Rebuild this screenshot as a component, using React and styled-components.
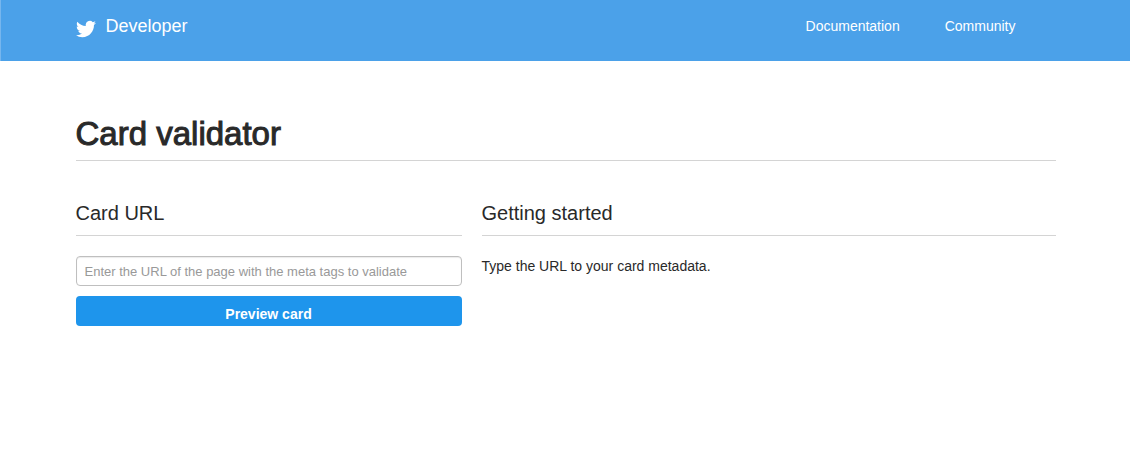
import React from 'react';
import styled, { createGlobalStyle } from 'styled-components';

const GlobalStyle = createGlobalStyle`
  *, *::before, *::after { box-sizing: border-box; }
  body {
    margin: 0;
    background: #fff;
    color: #292929;
    font: 14px/20px "Liberation Sans", Arial, sans-serif;
  }
`;

const Header = styled.header`
  min-height: 61px;
  background: #4ba1e9;
  border-left: 1px solid #76b6ee;
`;

const Container = styled.div`
  max-width: 1020px;
  margin: 0 auto;
  padding: 0 20px;
`;

const Bar = styled(Container)`
  display: flex;
  justify-content: space-between;
  align-items: flex-start;
  padding-top: 16px;
`;

const Brand = styled.a`
  display: flex;
  gap: 10px;
  color: #fff;
  font-size: 18px;
  line-height: 20px;
  text-decoration: none;
`;

const Bird = styled.svg`
  width: 20px;
  height: 20px;
  margin-top: 3px;
  fill: currentColor;
`;

const Nav = styled.nav`
  display: flex;
  gap: 45px;
  padding-right: 40px;
`;

const NavLink = styled.a`
  color: #fff;
  text-decoration: none;
`;

const Main = styled.main`
  padding: 52px 0 40px;
  border-left: 1px solid transparent;
`;

const Title = styled.h1`
  margin: 0 0 40px;
  padding-bottom: 6px;
  border-bottom: 1px solid #d4d4d4;
  font-size: 33px;
  line-height: 41px;
  font-weight: 400;
  -webkit-text-stroke: 1px currentColor;
`;

const Columns = styled.div`
  display: grid;
  grid-template-columns: minmax(0, 386fr) minmax(0, 574fr);
  gap: 20px;
`;

const SectionTitle = styled.h2`
  margin: 0 0 20px;
  padding-bottom: 10px;
  border-bottom: 1px solid #d4d4d4;
  font-size: 20px;
  line-height: 24px;
  font-weight: 400;
`;

const Form = styled.form`
  display: grid;
  gap: 10px;
`;

const UrlInput = styled.input`
  width: 100%;
  height: 30px;
  padding: 0 8px;
  border: 1px solid #bfbfbf;
  border-radius: 4px;
  background: #fff;
  color: inherit;
  font: inherit;
  font-size: 13px;
  box-shadow: inset 0 1px 1px rgba(0, 0, 0, 0.08);

  &::placeholder { color: #999; opacity: 1; }
`;

const SubmitButton = styled.button`
  height: 30px;
  padding: 6px 12px 0;
  border: 0;
  border-radius: 4px;
  background: #1e95ec;
  color: #fff;
  font: inherit;
  font-weight: 700;
  cursor: pointer;
`;

const Text = styled.p`
  margin: 0;
`;

export default function App() {
  return (
    <>
      <GlobalStyle />
      <Header>
        <Bar>
          <Brand href="#home">
            <Bird viewBox="0 0 24 24" aria-hidden="true">
              <path d="M23.954 4.569a10 10 0 0 1-2.825.775 4.958 4.958 0 0 0 2.163-2.723 9.99 9.99 0 0 1-3.127 1.184 4.92 4.92 0 0 0-8.384 4.482C7.691 8.094 4.066 6.13 1.64 3.161a4.822 4.822 0 0 0-.666 2.475c0 1.71.87 3.213 2.188 4.096a4.904 4.904 0 0 1-2.228-.616v.061a4.923 4.923 0 0 0 3.946 4.827 4.996 4.996 0 0 1-2.212.085 4.937 4.937 0 0 0 4.604 3.417 9.868 9.868 0 0 1-6.102 2.105c-.39 0-.779-.023-1.17-.067a13.995 13.995 0 0 0 7.557 2.209c9.054 0 13.999-7.496 13.999-13.986 0-.209 0-.42-.015-.63a9.936 9.936 0 0 0 2.46-2.548z" />
            </Bird>
            Developer
          </Brand>
          <Nav aria-label="Main">
            <NavLink href="#documentation">Documentation</NavLink>
            <NavLink href="#community">Community</NavLink>
          </Nav>
        </Bar>
      </Header>
      <Main>
        <Container>
          <Title>Card validator</Title>
          <Columns>
            <section>
              <SectionTitle id="card-url">Card URL</SectionTitle>
              <Form onSubmit={(event) => event.preventDefault()}>
                <UrlInput
                  type="text"
                  name="url"
                  aria-labelledby="card-url"
                  placeholder="Enter the URL of the page with the meta tags to validate"
                />
                <SubmitButton type="submit">Preview card</SubmitButton>
              </Form>
            </section>
            <section>
              <SectionTitle>Getting started</SectionTitle>
              <Text>Type the URL to your card metadata.</Text>
            </section>
          </Columns>
        </Container>
      </Main>
    </>
  );
}
